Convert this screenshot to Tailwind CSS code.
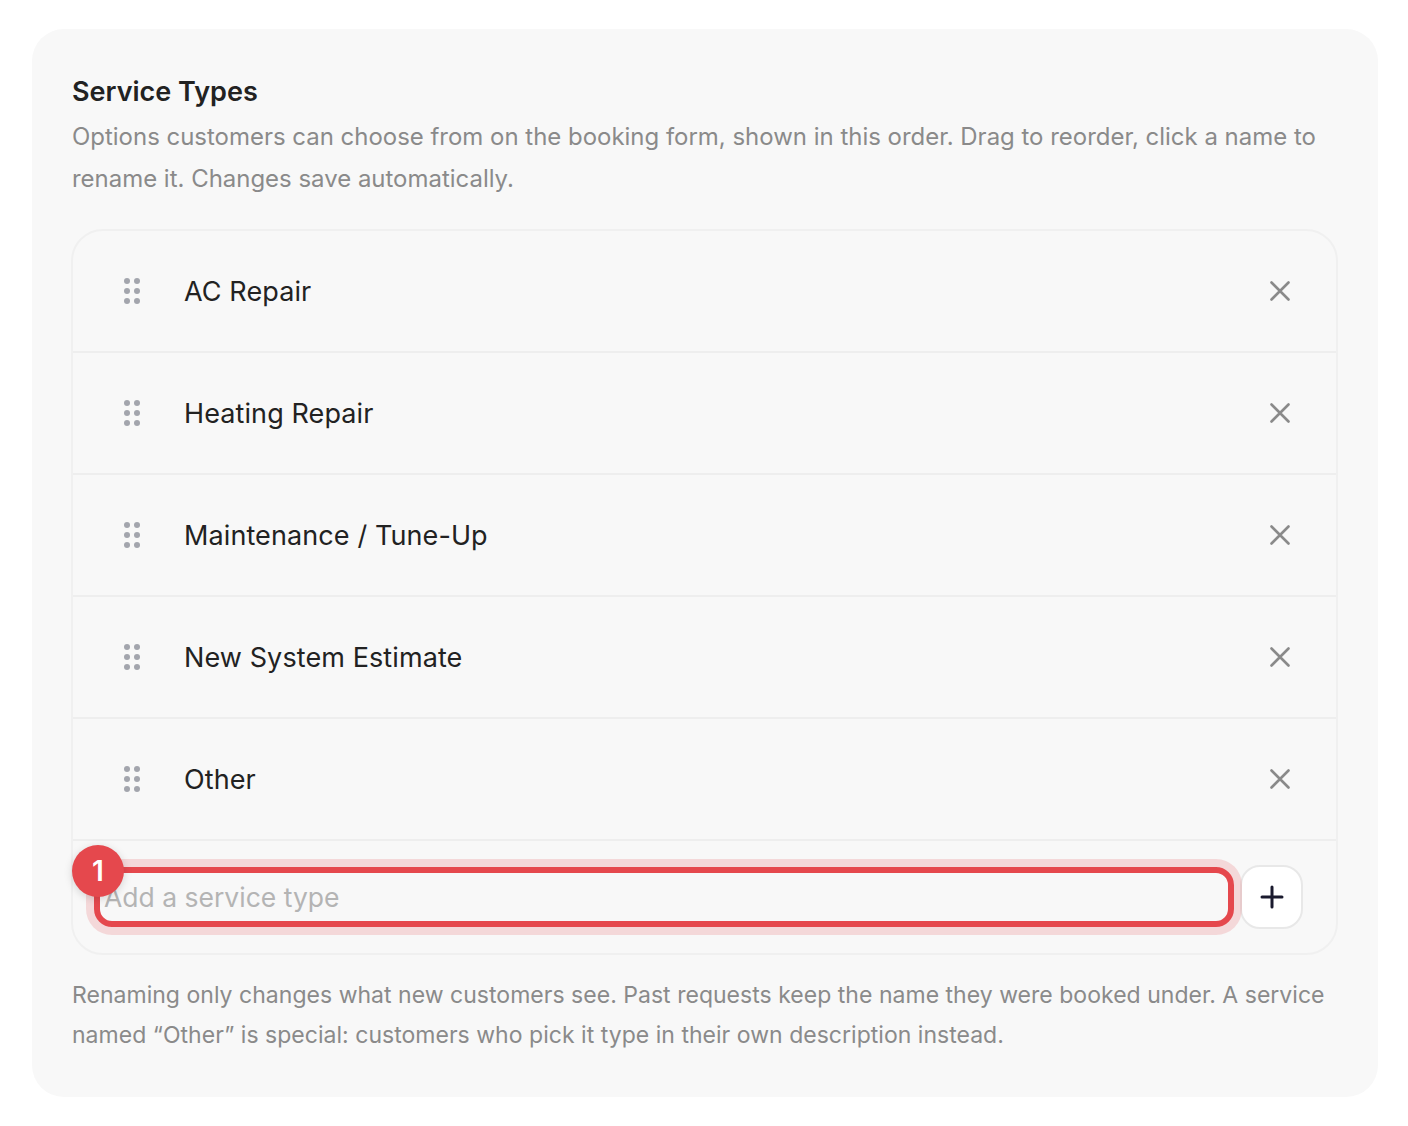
<!DOCTYPE html>
<html lang="en">
<head>
    <meta charset="UTF-8">
    <title>Service Types</title>
    <script src="https://cdn.jsdelivr.net/npm/@tailwindcss/browser@4"></script>
</head>
<body class="bg-white font-['Inter',sans-serif]">
    <div class="h-[1126px] pl-[32px] pr-[30px] pt-[29px]">
        <section class="h-[1068px] rounded-[32px] bg-[#f8f8f8] pl-[39px] pr-[40px] pt-[44px]">
            <h2 class="pl-[1px] text-[27px] leading-[38px] font-semibold text-[#222222]">Service Types</h2>
            <p class="mt-[5px] pl-[1px] text-[23.96px] leading-[42px] text-[#8a8a8a]">Options customers can choose from on the booking form, shown in this order. Drag to reorder, click a name to rename it. Changes save automatically.</p>

            <div class="mt-[29px] rounded-[32px] border-2 border-[#f0f0f0]">
                <!-- rows -->
                <div class="flex h-[122px] items-center border-b-2 border-[#eeeeee] pl-[49px] pr-[46px]">
                    <svg class="w-[20px] h-[30px] text-[#a3a5ad]" viewBox="0 0 20 30" fill="currentColor"><circle cx="5" cy="5" r="3"/><circle cx="15" cy="5" r="3"/><circle cx="5" cy="15" r="3"/><circle cx="15" cy="15" r="3"/><circle cx="5" cy="25" r="3"/><circle cx="15" cy="25" r="3"/></svg>
                    <span class="ml-[42px] flex-1 pt-[2px] text-[27px] tracking-[0.1px] text-[#222222]">AC Repair</span>
                    <svg class="w-[20px] h-[20px] text-[#8a8a8a]" viewBox="0 0 20 20" fill="none" stroke="currentColor" stroke-width="2.6" stroke-linecap="round"><path d="M1.5 1.5l17 17M18.5 1.5l-17 17"/></svg>
                </div>
                <div class="flex h-[122px] items-center border-b-2 border-[#eeeeee] pl-[49px] pr-[46px]">
                    <svg class="w-[20px] h-[30px] text-[#a3a5ad]" viewBox="0 0 20 30" fill="currentColor"><circle cx="5" cy="5" r="3"/><circle cx="15" cy="5" r="3"/><circle cx="5" cy="15" r="3"/><circle cx="15" cy="15" r="3"/><circle cx="5" cy="25" r="3"/><circle cx="15" cy="25" r="3"/></svg>
                    <span class="ml-[42px] flex-1 pt-[2px] text-[27px] tracking-[0.1px] text-[#222222]">Heating Repair</span>
                    <svg class="w-[20px] h-[20px] text-[#8a8a8a]" viewBox="0 0 20 20" fill="none" stroke="currentColor" stroke-width="2.6" stroke-linecap="round"><path d="M1.5 1.5l17 17M18.5 1.5l-17 17"/></svg>
                </div>
                <div class="flex h-[122px] items-center border-b-2 border-[#eeeeee] pl-[49px] pr-[46px]">
                    <svg class="w-[20px] h-[30px] text-[#a3a5ad]" viewBox="0 0 20 30" fill="currentColor"><circle cx="5" cy="5" r="3"/><circle cx="15" cy="5" r="3"/><circle cx="5" cy="15" r="3"/><circle cx="15" cy="15" r="3"/><circle cx="5" cy="25" r="3"/><circle cx="15" cy="25" r="3"/></svg>
                    <span class="ml-[42px] flex-1 pt-[2px] text-[27px] tracking-[0.1px] text-[#222222]">Maintenance / Tune-Up</span>
                    <svg class="w-[20px] h-[20px] text-[#8a8a8a]" viewBox="0 0 20 20" fill="none" stroke="currentColor" stroke-width="2.6" stroke-linecap="round"><path d="M1.5 1.5l17 17M18.5 1.5l-17 17"/></svg>
                </div>
                <div class="flex h-[122px] items-center border-b-2 border-[#eeeeee] pl-[49px] pr-[46px]">
                    <svg class="w-[20px] h-[30px] text-[#a3a5ad]" viewBox="0 0 20 30" fill="currentColor"><circle cx="5" cy="5" r="3"/><circle cx="15" cy="5" r="3"/><circle cx="5" cy="15" r="3"/><circle cx="15" cy="15" r="3"/><circle cx="5" cy="25" r="3"/><circle cx="15" cy="25" r="3"/></svg>
                    <span class="ml-[42px] flex-1 pt-[2px] text-[27px] tracking-[0.1px] text-[#222222]">New System Estimate</span>
                    <svg class="w-[20px] h-[20px] text-[#8a8a8a]" viewBox="0 0 20 20" fill="none" stroke="currentColor" stroke-width="2.6" stroke-linecap="round"><path d="M1.5 1.5l17 17M18.5 1.5l-17 17"/></svg>
                </div>
                <div class="flex h-[122px] items-center border-b-2 border-[#eeeeee] pl-[49px] pr-[46px]">
                    <svg class="w-[20px] h-[30px] text-[#a3a5ad]" viewBox="0 0 20 30" fill="currentColor"><circle cx="5" cy="5" r="3"/><circle cx="15" cy="5" r="3"/><circle cx="5" cy="15" r="3"/><circle cx="15" cy="15" r="3"/><circle cx="5" cy="25" r="3"/><circle cx="15" cy="25" r="3"/></svg>
                    <span class="ml-[42px] flex-1 pt-[2px] text-[27px] tracking-[0.1px] text-[#222222]">Other</span>
                    <svg class="w-[20px] h-[20px] text-[#8a8a8a]" viewBox="0 0 20 20" fill="none" stroke="currentColor" stroke-width="2.6" stroke-linecap="round"><path d="M1.5 1.5l17 17M18.5 1.5l-17 17"/></svg>
                </div>

                <!-- add row -->
                <div class="flex h-[112px] items-center gap-[6px] pl-[21px] pr-[33px]">
                    <div class="relative flex-1">
                        <div class="flex h-[60px] items-center rounded-[18px] border-[6px] border-[#e5484d] pl-[4px] pt-[2px] text-[26.5px] text-[#b4b4b4] shadow-[0_0_0_8px_rgba(229,72,77,0.18)]">Add a service type</div>
                        <span class="absolute left-[-22px] top-[-22px] flex h-[52px] w-[52px] items-center justify-center rounded-full bg-[#e5484d] text-[28px] font-semibold text-white shadow-[0_2px_8px_rgba(0,0,0,0.15)]">1</span>
                    </div>
                    <button class="flex h-[64px] w-[63px] items-center justify-center rounded-[20px] border-2 border-[#e8e8e8] bg-white">
                        <svg class="w-[24px] h-[24px] text-[#1a1a2e]" viewBox="0 0 24 24" fill="none" stroke="currentColor" stroke-width="3" stroke-linecap="round"><path d="M12 2v20M2 12h20"/></svg>
                    </button>
                </div>
            </div>

            <p class="mt-[20px] pl-[1px] text-[23px] leading-[40px] tracking-[0.025px] text-[#8a8a8a]">Renaming only changes what new customers see. Past requests keep the name they were booked under. A service named “Other” is special: customers who pick it type in their own description instead.</p>
        </section>
    </div>
</body>
</html>
